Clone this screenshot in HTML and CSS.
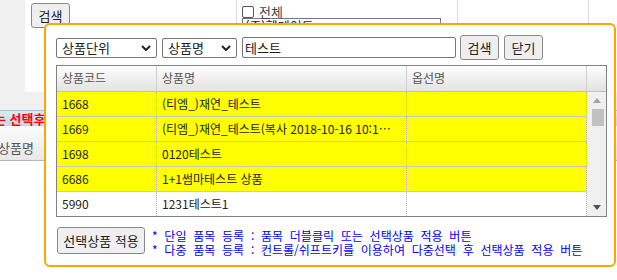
FILE: index.html
```html
<!DOCTYPE html>
<html lang="ko">
<head>
    <meta charset="UTF-8">
    <meta name="viewport" content="width=device-width, initial-scale=1.0">
    <title>상품 검색</title>
    <link rel="stylesheet" href="styles.css">
</head>
<body>
    <div class="page">
        <div class="top">
            <div class="side"></div>
            <div class="panel">
                <div class="cell cell-search"><button class="btn btn-sm">검색</button></div>
                <div class="cell cell-filter">
                    <label class="check"><span class="box"></span>전체</label>
                    <div class="pick">(주)헬메이드</div>
                </div>
                <div class="cell cell-wide"></div>
                <div class="cell cell-rest"></div>
            </div>
        </div>
        <div class="gap"></div>
        <div class="notice">는 선택후 적용</div>
        <div class="col-head">상품명</div>
    </div>

    <div class="popup">
        <div class="toolbar">
            <div class="select w1">
                <span>상품단위</span>
                <svg width="10" height="6" viewBox="0 0 10 6"><path d="M1 1l4 4 4-4" fill="none" stroke="#222" stroke-width="2"/></svg>
            </div>
            <div class="select w2">
                <span>상품명</span>
                <svg width="10" height="6" viewBox="0 0 10 6"><path d="M1 1l4 4 4-4" fill="none" stroke="#222" stroke-width="2"/></svg>
            </div>
            <input class="search-input" type="text" value="테스트">
            <button class="btn btn-sm">검색</button>
            <button class="btn btn-sm">닫기</button>
        </div>

        <div class="grid">
            <div class="grid-head">
                <span>상품코드</span>
                <span>상품명</span>
                <span>옵선명</span>
                <span></span>
            </div>
            <div class="grid-body">
                <div class="rows">
                    <div class="row hit"><span>1668</span><span>(티엠_)재연_테스트</span><span></span></div>
                    <div class="row hit"><span>1669</span><span>(티엠_)재연_테스트(복사 2018-10-16 10:12:35)</span><span></span></div>
                    <div class="row hit"><span>1698</span><span>0120테스트</span><span></span></div>
                    <div class="row hit"><span>6686</span><span>1+1썸마테스트 상품</span><span></span></div>
                    <div class="row"><span>5990</span><span>1231테스트1</span><span></span></div>
                </div>
                <div class="scroll">
                    <div class="arrow">
                        <svg width="8" height="5" viewBox="0 0 8 5"><path d="M0 5L4 0 8 5z" fill="#a3a3a3"/></svg>
                    </div>
                    <div class="thumb"></div>
                    <div class="track"></div>
                    <div class="arrow">
                        <svg width="8" height="5" viewBox="0 0 8 5"><path d="M0 0L8 0 4 5z" fill="#505050"/></svg>
                    </div>
                </div>
            </div>
        </div>

        <div class="footer">
            <button class="btn apply">선택상품 적용</button>
            <div class="help">
                <p>* 단일 품목 등록 : 품목 더블클릭 또는 선택상품 적용 버튼</p>
                <p>* 다중 품목 등록 : 컨트롤/쉬프트키를 이용하여 다중선택 후 선택상품 적용 버튼</p>
            </div>
        </div>
    </div>
</body>
</html>
```

FILE: styles.css
```css
body {
    margin: 0;
    width: 617px;
    height: 280px;
    overflow: hidden;
    position: relative;
    font-family: "Noto Sans CJK KR", "Noto Sans", sans-serif;
    font-size: 12px;
    color: #222;
    background-color: #fff;
}

/* 뒤쪽 화면 */
.top {
    display: flex;
    height: 92px;
}

.side {
    width: 25px;
    background-color: #f0f0f0;
}

.panel {
    flex: 1;
    display: flex;
    background-color: #fff;
}

.cell {
    box-sizing: border-box;
    border-left: 1px solid #dcdcdc;
}

.cell-search {
    width: 211px;
    padding: 3px 6px;
    border-left: none;
}

.cell-filter {
    width: 221px;
    padding: 5px;
}

.cell-wide {
    width: 131px;
}

.cell-rest {
    flex: 1;
}

.check {
    display: flex;
    align-items: center;
    gap: 5px;
    height: 13px;
    font-size: 13px;
    line-height: 13px;
    color: #444;
}

.box {
    width: 10px;
    height: 10px;
    border: 1px solid #555;
    border-radius: 2px;
}

.pick {
    box-sizing: border-box;
    width: 199px;
    height: 20px;
    border: 1px solid #777;
    font-size: 13px;
    line-height: 14px;
    padding-left: 2px;
}

.gap {
    height: 18px;
    background-color: #f0f0f0;
}

.notice {
    height: 15px;
    border-top: 1px solid #a9bfd9;
    background: linear-gradient(#dce9f8, #c3d7ee);
    color: #f00;
    font-weight: bold;
    font-size: 13px;
    line-height: 15px;
    text-indent: -6px;
    white-space: nowrap;
    overflow: hidden;
}

.col-head {
    box-sizing: border-box;
    height: 35px;
    padding-top: 14px;
    background: linear-gradient(#fbfbfb, #e8e8e8);
    border-bottom: 1px solid #b5b5b5;
    font-size: 13px;
    line-height: 16px;
    color: #555;
    text-indent: -2px;
}

/* 상품 검색 팝업 */
.popup {
    position: absolute;
    left: 44px;
    top: 23px;
    width: 572px;
    height: 244px;
    box-sizing: border-box;
    border: 2px solid #ffa500;
    border-radius: 6px;
    background-color: #fff;
    padding: 10px 7px 0 10px;
    display: flex;
    flex-direction: column;
}

.toolbar {
    display: flex;
    align-items: center;
    gap: 5px;
    height: 25px;
}

.select {
    box-sizing: border-box;
    display: flex;
    align-items: center;
    justify-content: space-between;
    height: 20px;
    border: 1px solid #767676;
    border-radius: 2px;
    padding: 0 5px;
    font-size: 13px;
    line-height: 18px;
}

.w1 {
    width: 101px;
}

.w2 {
    width: 75px;
}

.search-input {
    box-sizing: border-box;
    width: 214px;
    height: 21px;
    margin: 0 -1px 0 0;
    border: 1px solid #767676;
    border-radius: 2px;
    padding: 0 2px;
    font-family: inherit;
    font-size: 13px;
    color: #222;
    outline: none;
}

.btn {
    box-sizing: border-box;
    height: 25px;
    border: 1px solid #8a8a8a;
    border-radius: 3px;
    background-color: #efefef;
    font-family: inherit;
    font-size: 13px;
    line-height: 20px;
    color: #222;
    padding: 0;
}

.btn-sm {
    width: 39px;
}

.grid {
    box-sizing: border-box;
    margin-top: 5px;
    width: 551px;
    height: 152px;
    border: 1px solid #828282;
    overflow: hidden;
}

.grid-head {
    display: grid;
    grid-template-columns: 100px 250px 180px 20px;
    box-sizing: border-box;
    height: 26px;
    border-bottom: 1px solid #c0c0c0;
    background: linear-gradient(#fdfdfd, #e3e3e3);
}

.grid-head span {
    border-right: 1px solid #cfcfcf;
    padding-left: 5px;
    line-height: 24px;
    color: #555;
}

.grid-body {
    display: flex;
    height: 124px;
    overflow: hidden;
}

.rows {
    width: 530px;
}

.row {
    display: grid;
    grid-template-columns: 100px 250px 180px;
    box-sizing: border-box;
    height: 25px;
    border-bottom: 1px solid #c8c8c8;
}

.row.hit {
    background-color: #ff0;
}

.row span {
    border-right: 1px dotted #b8b8b8;
    padding: 0 10px 0 5px;
    line-height: 24px;
    white-space: nowrap;
    overflow: hidden;
    text-overflow: ellipsis;
}

.scroll {
    width: 20px;
    background-color: #f0f0f0;
    display: flex;
    flex-direction: column;
    align-items: center;
}

.arrow {
    height: 17px;
    display: flex;
    align-items: center;
    justify-content: center;
}

.thumb {
    width: 12px;
    height: 17px;
    margin-left: 2px;
    background-color: #c1c1c1;
}

.track {
    flex: 1;
}

.footer {
    display: flex;
    align-items: flex-start;
    gap: 7px;
    margin-top: 10px;
    padding-left: 1px;
}

.apply {
    width: 88px;
    height: 27px;
}

.help {
    padding-top: 2px;
    color: #00f;
    font-size: 12px;
    line-height: 14px;
    word-spacing: 3.4px;
    white-space: nowrap;
}

.help p {
    margin: 0;
}
```
